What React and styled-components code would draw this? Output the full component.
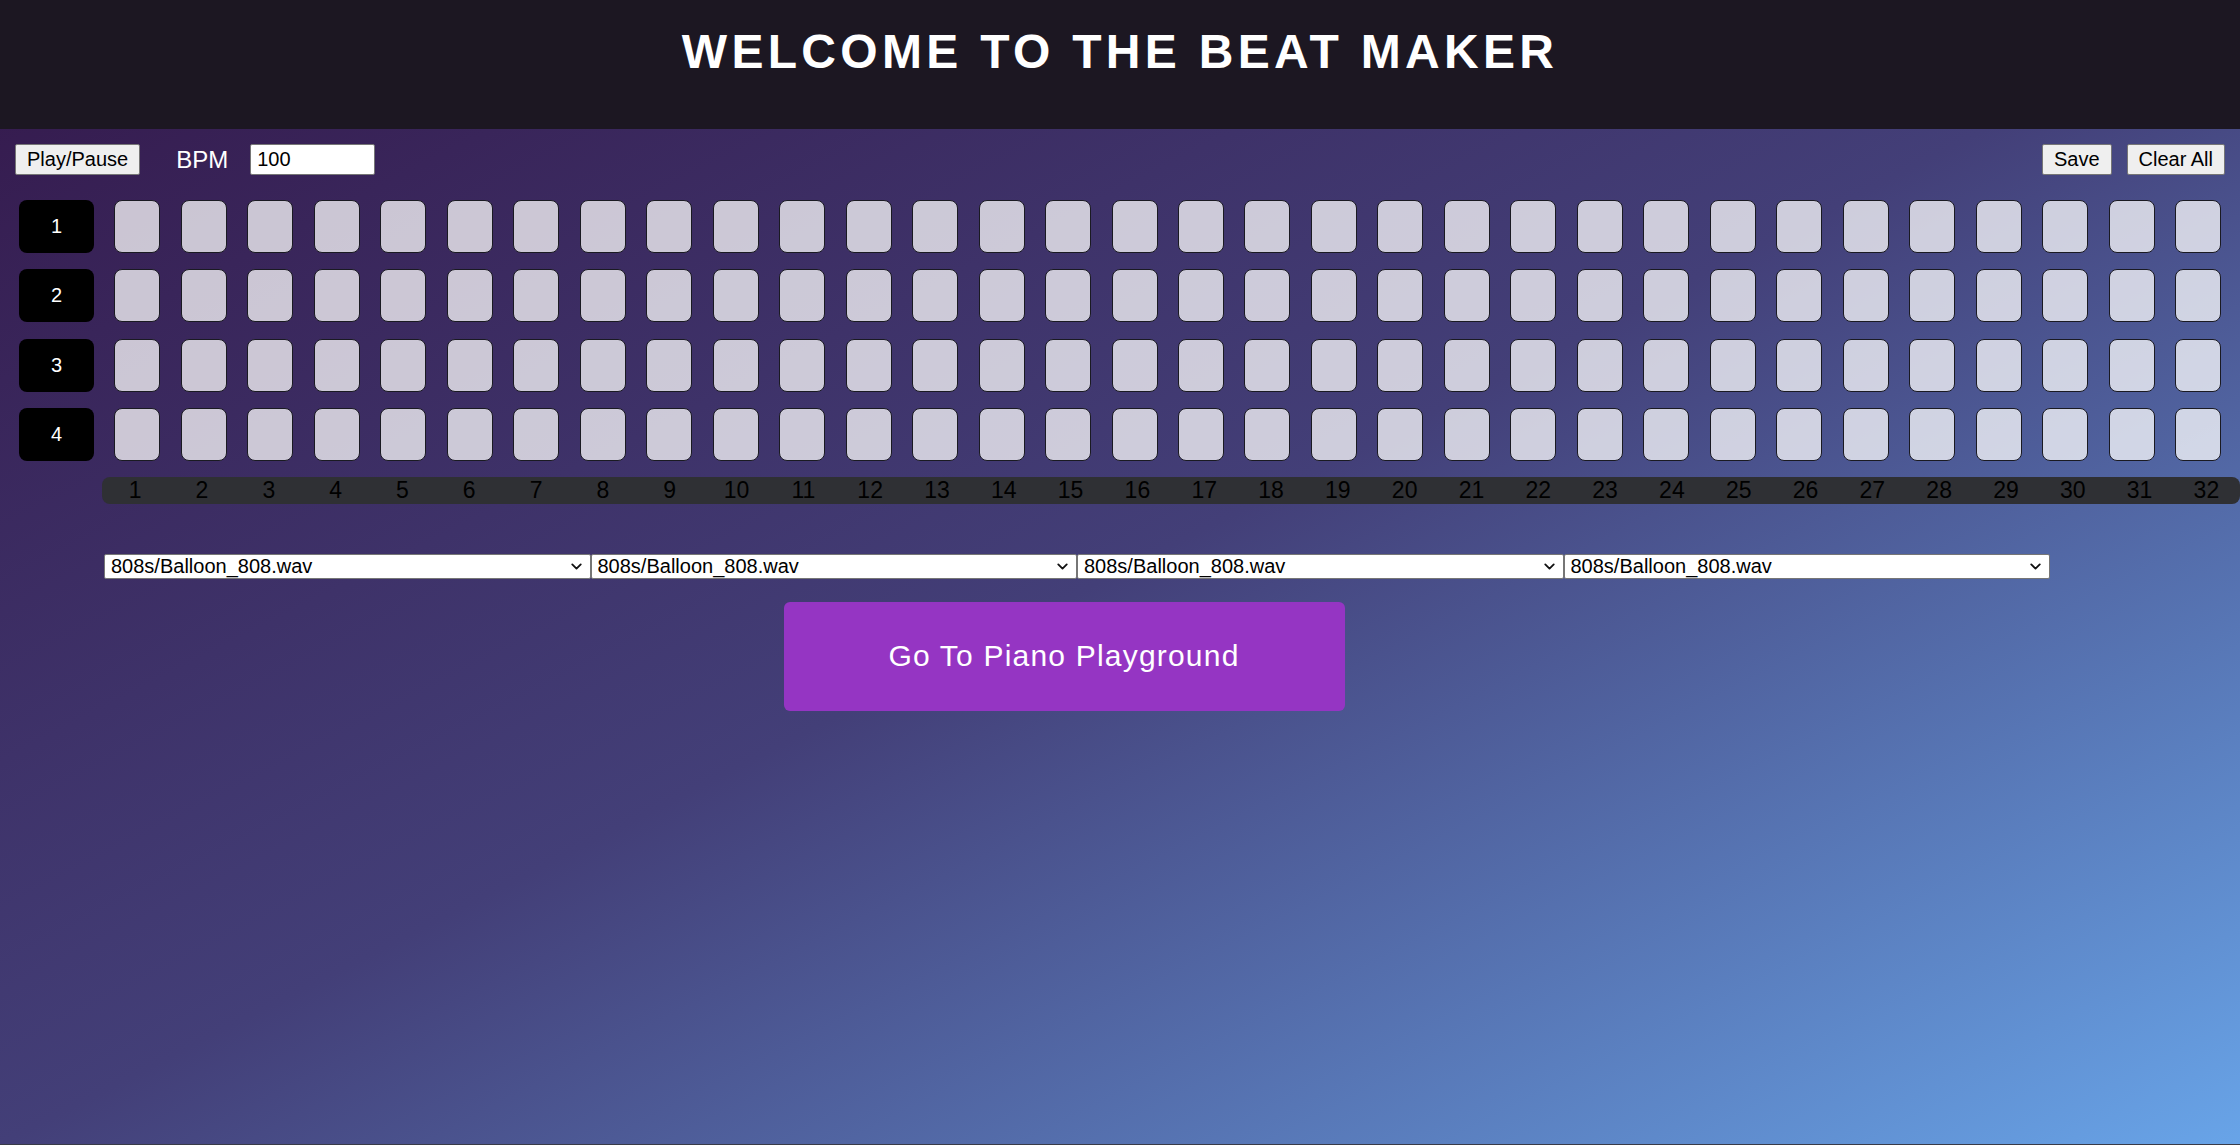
import React from 'react';
import styled, { createGlobalStyle } from 'styled-components';
import { ChevronDown } from 'lucide-react';

const GlobalStyle = createGlobalStyle`
  html, body {
    margin: 0;
    padding: 0;
    background: #393b48;
    font-family: "Liberation Sans", Arial, sans-serif;
  }
`;

// whole page, the gradient runs under the header too
const Page = styled.div`
  min-height: calc(100vh - 1px);
  background: linear-gradient(to bottom right, #34184b 0%, #433f78 50%, #68a4e8 100%);
  overflow: hidden;
`;

const Header = styled.header`
  height: 129px;
  box-sizing: border-box;
  padding-top: 24px;
  background-color: #1c1722;
  text-align: center;
`;

const Title = styled.h1`
  margin: 0;
  color: #ffffff;
  font-size: 48px;
  font-weight: bold;
  letter-spacing: 4.3px;
  line-height: normal;
`;

const Toolbar = styled.div`
  display: flex;
  justify-content: space-between;
  align-items: center;
  padding: 15px 15px 0 15px;
`;

const Group = styled.div`
  display: flex;
  align-items: center;
  gap: ${p => p.gap || 0}px;
`;

const PlainButton = styled.button`
  height: 31px;
  box-sizing: border-box;
  padding: 0 11px;
  font-family: "Liberation Sans", Arial, sans-serif;
  font-size: 20px;
  color: #000;
  background-color: #efefef;
  border: 1px solid #767676;
  border-radius: 2px;
`;

const Label = styled.span`
  margin: 0 22px 0 36px;
  color: #ffffff;
  font-size: 24px;
`;

const BpmInput = styled.input`
  width: 125px;
  height: 31px;
  box-sizing: border-box;
  padding: 0 6px;
  font-family: "Liberation Sans", Arial, sans-serif;
  font-size: 20px;
  border: 1px solid #767676;
  border-radius: 2px;
  background: #fff;
`;

const Grid = styled.div`
  display: flex;
  flex-direction: column;
  gap: 16.3px;
  margin-top: 25px;
`;

const Row = styled.div`
  display: flex;
  justify-content: space-between;
  padding: 0 19px;
`;

const RowLabel = styled.div`
  width: 75px;
  height: 53px;
  display: flex;
  align-items: center;
  justify-content: center;
  background-color: #000;
  color: #fff;
  font-size: 20px;
  border-radius: 8px;
`;

const Cell = styled.button`
  width: 46px;
  height: 53px;
  box-sizing: border-box;
  padding: 0;
  border: 1px solid #1a1a22;
  border-radius: 8px;
  background-color: ${p => (p.on ? '#9535c3' : 'rgba(255, 255, 255, 0.74)')};
`;

const NumberBar = styled.div`
  display: flex;
  height: 27px;
  margin: 16px 0 0 101.8px;
  background-color: #2f3034;
  border-radius: 8px;
`;

const StepNumber = styled.div`
  flex: 1;
  text-align: center;
  font-size: 23px;
  line-height: 27px;
  color: #000;
`;

const SoundRow = styled.div`
  display: flex;
  padding-left: 104px;
  margin-top: 50px;
`;

const SelectBox = styled.div`
  position: relative;
  width: 486.5px;
  height: 25px;
`;

const SoundSelect = styled.select`
  appearance: none;
  display: block;
  width: 100%;
  height: 100%;
  box-sizing: border-box;
  font-family: "Liberation Sans", Arial, sans-serif;
  font-size: 20px;
  line-height: 23px;
  color: #000;
  background-color: #fff;
  border: 1px solid #767676;
  border-radius: 2px;
  padding: 0 26px 0 6px;
`;

const Arrow = styled(ChevronDown)`
  position: absolute;
  right: 6px;
  top: 4px;
  pointer-events: none;
  color: #111;
`;

const PianoWrap = styled.div`
  display: flex;
  justify-content: center;
  width: 2128px;
  margin-top: 23px;
`;

const PianoButton = styled.button`
  width: 561px;
  height: 109px;
  border: none;
  border-radius: 6px;
  background-color: #9535c3;
  color: #fff;
  font-family: "Liberation Sans", Arial, sans-serif;
  font-size: 30px;
  letter-spacing: 1.2px;
`;

const steps = Array.from({ length: 32 }, (_, i) => i + 1);
const tracks = [1, 2, 3, 4];

function App() {
  return (
    <Page>
      <GlobalStyle />
      <Header>
        <Title>WELCOME TO THE BEAT MAKER</Title>
      </Header>

      <Toolbar>
        <Group>
          <PlainButton>Play/Pause</PlainButton>
          <Label>BPM</Label>
          <BpmInput defaultValue="100" />
        </Group>
        <Group gap={15}>
          <PlainButton>Save</PlainButton>
          <PlainButton>Clear All</PlainButton>
        </Group>
      </Toolbar>

      {/* sequencer grid */}
      <Grid>
        {tracks.map(t => (
          <Row key={t}>
            <RowLabel>{t}</RowLabel>
            {steps.map(s => (
              <Cell key={s} />
            ))}
          </Row>
        ))}
      </Grid>

      <NumberBar>
        {steps.map(s => (
          <StepNumber key={s}>{s}</StepNumber>
        ))}
      </NumberBar>

      <SoundRow>
        {tracks.map(t => (
          <SelectBox key={t}>
            <SoundSelect defaultValue="808s/Balloon_808.wav">
              <option>808s/Balloon_808.wav</option>
            </SoundSelect>
            <Arrow size={17} strokeWidth={2.6} />
          </SelectBox>
        ))}
      </SoundRow>

      <PianoWrap>
        <PianoButton>Go To Piano Playground</PianoButton>
      </PianoWrap>
    </Page>
  );
}

export default App;
